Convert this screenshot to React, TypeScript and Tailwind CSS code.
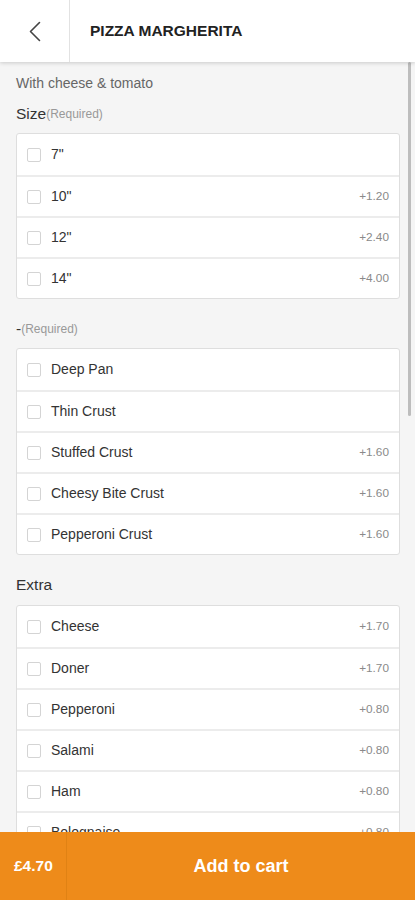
import React from 'react';

type Option = {
  name: string;
  price?: string;
};

type Group = {
  title: string;
  required?: boolean;
  options: Option[];
};

const groups: Group[] = [
  {
    title: 'Size',
    required: true,
    options: [
      { name: '7"' },
      { name: '10"', price: '+1.20' },
      { name: '12"', price: '+2.40' },
      { name: '14"', price: '+4.00' },
    ],
  },
  {
    title: '-',
    required: true,
    options: [
      { name: 'Deep Pan' },
      { name: 'Thin Crust' },
      { name: 'Stuffed Crust', price: '+1.60' },
      { name: 'Cheesy Bite Crust', price: '+1.60' },
      { name: 'Pepperoni Crust', price: '+1.60' },
    ],
  },
  {
    title: 'Extra',
    options: [
      { name: 'Cheese', price: '+1.70' },
      { name: 'Doner', price: '+1.70' },
      { name: 'Pepperoni', price: '+0.80' },
      { name: 'Salami', price: '+0.80' },
      { name: 'Ham', price: '+0.80' },
      { name: 'Bolognaise', price: '+0.80' },
      { name: 'Chicken', price: '+0.80' },
    ],
  },
];

export default function App() {
  return (
    <div
      className="flex h-[900px] w-[415px] flex-col overflow-hidden bg-[#f5f5f5] text-[#333]"
      style={{ fontFamily: '"Liberation Sans", Arial, sans-serif' }}
    >
      {/* Header */}
      <header className="relative z-10 flex h-[62px] shrink-0 items-stretch bg-white shadow-[0_1px_4px_rgba(0,0,0,0.18)]">
        <button className="flex w-[70px] items-center justify-center border-r border-[#e2e2e2]">
          <svg width="13" height="21" viewBox="0 0 13 21" fill="none">
            <path d="M11.5 1.5L2.5 10.5L11.5 19.5" stroke="#444" strokeWidth="1.6" strokeLinecap="round" strokeLinejoin="round" />
          </svg>
        </button>
        <h1 className="flex items-center pl-5 text-[15.5px] font-bold text-[#222]">PIZZA MARGHERITA</h1>
      </header>

      {/* Content */}
      <div className="relative flex-1 overflow-hidden">
        <div className="pl-4 pr-[15px] pt-[13px]">
          <p className="text-[14px] leading-4 text-[#666]">With cheese &amp; tomato</p>

          {groups.map((group, gi) => (
            <section key={group.title} className={gi === 0 ? 'mt-[13px]' : 'mt-5'}>
              <div className="flex h-5 items-center">
                <span className="text-[15.5px] text-[#333]">{group.title}</span>
                {group.required && <span className="text-[12px] text-[#999]">(Required)</span>}
              </div>
              <div className={`${gi === 2 ? 'mt-[10px]' : 'mt-[9px]'} rounded-[3px] border border-[#dedede] bg-white`}>
                {group.options.map((opt, i) => (
                  <div
                    key={opt.name}
                    className={`flex h-[41px] items-center px-[10px] ${i > 0 ? 'border-t-2 border-[#ececec]' : ''}`}
                  >
                    <span className="h-[14px] w-[14px] shrink-0 rounded-[2px] border border-[#d4d4d4] bg-white" />
                    <span className="ml-[10px] flex-1 text-[14px] text-[#333]">{opt.name}</span>
                    {opt.price && <span className="text-[11.8px] text-[#8a8a8a]">{opt.price}</span>}
                  </div>
                ))}
              </div>
            </section>
          ))}
        </div>

        {/* Scrollbar */}
        <div className="absolute right-[4px] top-0 h-[354px] w-[3px] rounded-full bg-[#bdbdbd]" />
      </div>

      {/* Bottom bar */}
      <footer className="flex h-[68px] shrink-0 items-stretch bg-[#ee8b1a] text-white">
        <div className="flex w-[67px] items-center border-r border-[#e08214] pl-[14px] text-[15.5px] font-bold">
          £4.70
        </div>
        <button className="flex flex-1 items-center justify-center text-[18px] font-bold">Add to cart</button>
      </footer>
    </div>
  );
}
